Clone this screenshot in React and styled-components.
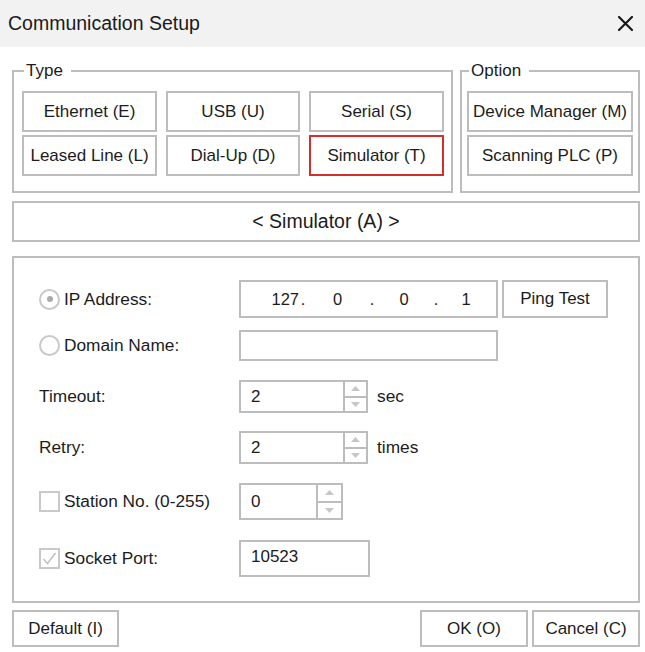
import React from 'react';
import styled, { createGlobalStyle } from 'styled-components';

const GlobalStyle = createGlobalStyle`
  html, body { margin: 0; padding: 0; background: #fff; }
  body { font-family: "Liberation Sans", Arial, Helvetica, sans-serif; color: #1c1c1c; }
  * { box-sizing: border-box; }
`;

const BORDER = '#bdbdbd';

const Dialog = styled.div`
  width: 645px;
  height: 652px;
  display: flex;
  flex-direction: column;
  background: #fff;
`;

const TitleBar = styled.div`
  height: 47px;
  flex: none;
  background: #f2f2f2;
  display: flex;
  align-items: center;
  justify-content: space-between;
  padding: 0 11px 0 8px;
  font-size: 19.5px;
  color: #1a1a1a;
`;

const CloseButton = styled.button`
  border: 0;
  background: none;
  padding: 0;
  width: 18px;
  height: 18px;
  display: flex;
  align-items: center;
  justify-content: center;
  cursor: pointer;
`;

const Body = styled.div`
  padding: 15px 5px 0 12px;
  display: flex;
  flex-direction: column;
`;

const GroupRow = styled.div`
  display: flex;
  gap: 7px;
`;

const Group = styled.fieldset`
  width: ${p => p.$w}px;
  margin: 0;
  min-width: 0;
  border: 2px solid ${BORDER};
  padding: 11px ${p => p.$pr}px 15px ${p => p.$pl}px;
`;

const Legend = styled.legend`
  font-size: 17px;
  line-height: 18px;
  margin-left: 2px;
  padding: 0 8px 0 2px;
  color: #1c1c1c;
`;

const ButtonGrid = styled.div`
  display: grid;
  grid-template-columns: ${p => p.$cols};
  grid-auto-rows: 41px;
  column-gap: 9px;
  row-gap: 3px;
`;

const TypeButton = styled.button`
  border: 2px solid ${p => (p.$active ? '#d3302c' : BORDER)};
  background: #fff;
  font-family: inherit;
  font-size: 17px;
  color: #1c1c1c;
  padding: 0;
  white-space: nowrap;
  cursor: pointer;
`;

const ModeBar = styled.div`
  margin-top: 8px;
  height: 41px;
  border: 2px solid ${BORDER};
  display: flex;
  align-items: center;
  justify-content: center;
  font-size: 19.5px;
`;

const Panel = styled.div`
  margin-top: 14px;
  height: 347px;
  border: 2px solid ${BORDER};
  padding: 22px 0 0 25px;
  display: flex;
  flex-direction: column;
`;

const FormRow = styled.div`
  display: grid;
  grid-template-columns: 200px auto;
  height: ${p => p.$h}px;
  margin-top: ${p => p.$mt || 0}px;
`;

const LabelCell = styled.label`
  display: flex;
  align-items: center;
  gap: 4px;
  font-size: 17.3px;
  color: #1c1c1c;
`;

const FieldCell = styled.div`
  display: flex;
  align-items: center;
  gap: ${p => p.$gap || 4}px;
  font-size: 17px;
`;

const Radio = styled.span`
  width: 21px;
  height: 21px;
  border-radius: 50%;
  border: 2px solid #c9c9c9;
  display: flex;
  align-items: center;
  justify-content: center;
  flex: none;
  &::after {
    content: '';
    width: 6px;
    height: 6px;
    border-radius: 50%;
    background: ${p => (p.$checked ? '#ababab' : 'transparent')};
  }
`;

const Check = styled.span`
  width: 21px;
  height: 21px;
  border: 2px solid #c9c9c9;
  display: flex;
  align-items: center;
  justify-content: center;
  flex: none;
`;

const InputBox = styled.div`
  width: ${p => p.$w}px;
  height: 100%;
  border: 2px solid ${BORDER};
  display: flex;
  align-items: ${p => (p.$top ? 'flex-start' : 'center')};
  padding: ${p => (p.$top ? '5px 0 0 10px' : '0 0 0 10px')};
  font-size: 17px;
  color: #1c1c1c;
`;

const IpBox = styled.div`
  width: 259px;
  height: 100%;
  border: 2px solid ${BORDER};
  display: grid;
  grid-template-columns: 58px 8px 61px 8px 56px 8px 52px;
  align-items: center;
  font-size: 16.5px;
`;

const IpPart = styled.span`
  text-align: ${p => p.$align || 'center'};
`;

const PingButton = styled.button`
  width: 106px;
  height: 100%;
  border: 2px solid ${BORDER};
  background: #fff;
  font-family: inherit;
  font-size: 17px;
  color: #1c1c1c;
  padding: 0;
  cursor: pointer;
`;

const SpinBox = styled.div`
  width: ${p => p.$w}px;
  height: 100%;
  border: 2px solid ${BORDER};
  display: flex;
`;

const SpinValue = styled.div`
  flex: 1;
  display: flex;
  align-items: center;
  padding-left: 10px;
  font-size: 17px;
`;

const SpinColumn = styled.div`
  width: ${p => p.$w}px;
  border-left: 2px solid ${BORDER};
  display: flex;
  flex-direction: column;
`;

const SpinHalf = styled.div`
  flex: 1;
  display: flex;
  align-items: center;
  justify-content: center;
  & + & { border-top: 2px solid ${BORDER}; }
`;

const Unit = styled.span`
  font-size: 17.3px;
`;

const Footer = styled.div`
  margin-top: 7px;
  display: flex;
  justify-content: space-between;
`;

const FooterGroup = styled.div`
  display: flex;
  gap: 4px;
`;

const FooterButton = styled.button`
  width: ${p => p.$w}px;
  height: 37px;
  border: 2px solid ${BORDER};
  background: #fff;
  font-family: inherit;
  font-size: 17px;
  color: #1c1c1c;
  padding: 0;
  cursor: pointer;
`;

const Arrow = ({ up }) => (
  <svg width="9" height="5" viewBox="0 0 9 5">
    <polygon points={up ? '0,5 9,5 4.5,0' : '0,0 9,0 4.5,5'} fill="#c6c6c6" />
  </svg>
);

const Spinner = ({ width, spinW, value }) => (
  <SpinBox $w={width}>
    <SpinValue>{value}</SpinValue>
    <SpinColumn $w={spinW}>
      <SpinHalf><Arrow up /></SpinHalf>
      <SpinHalf><Arrow /></SpinHalf>
    </SpinColumn>
  </SpinBox>
);

export default function App() {
  return (
    <>
      <GlobalStyle />
      <Dialog>
        <TitleBar>
          <span>Communication Setup</span>
          <CloseButton aria-label="Close">
            <svg width="15" height="15" viewBox="0 0 15 15">
              <path d="M1 1 L14 14 M14 1 L1 14" stroke="#1a1a1a" strokeWidth="2.2" strokeLinecap="round" />
            </svg>
          </CloseButton>
        </TitleBar>
        <Body>
          <GroupRow>
            <Group $w={441} $pl={8} $pr={7}>
              <Legend>Type</Legend>
              <ButtonGrid $cols="135px 134px 135px">
                <TypeButton>Ethernet (E)</TypeButton>
                <TypeButton>USB (U)</TypeButton>
                <TypeButton>Serial (S)</TypeButton>
                <TypeButton>Leased Line (L)</TypeButton>
                <TypeButton>Dial-Up (D)</TypeButton>
                <TypeButton $active>Simulator (T)</TypeButton>
              </ButtonGrid>
            </Group>
            <Group $w={180} $pl={5} $pr={5}>
              <Legend>Option</Legend>
              <ButtonGrid $cols="166px">
                <TypeButton>Device Manager (M)</TypeButton>
                <TypeButton>Scanning PLC (P)</TypeButton>
              </ButtonGrid>
            </Group>
          </GroupRow>
          <ModeBar>&lt; Simulator (A) &gt;</ModeBar>
          <Panel>
            <FormRow $h={38}>
              <LabelCell><Radio $checked />IP Address:</LabelCell>
              <FieldCell>
                <IpBox>
                  <IpPart $align="right">127</IpPart>
                  <IpPart>.</IpPart>
                  <IpPart>0</IpPart>
                  <IpPart>.</IpPart>
                  <IpPart>0</IpPart>
                  <IpPart>.</IpPart>
                  <IpPart>1</IpPart>
                </IpBox>
                <PingButton>Ping Test</PingButton>
              </FieldCell>
            </FormRow>
            <FormRow $h={31} $mt={12}>
              <LabelCell><Radio />Domain Name:</LabelCell>
              <FieldCell>
                <InputBox $w={259} />
              </FieldCell>
            </FormRow>
            <FormRow $h={33} $mt={19}>
              <LabelCell>Timeout:</LabelCell>
              <FieldCell $gap={9}>
                <Spinner width={129} spinW={23} value="2" />
                <Unit>sec</Unit>
              </FieldCell>
            </FormRow>
            <FormRow $h={33} $mt={18}>
              <LabelCell>Retry:</LabelCell>
              <FieldCell $gap={9}>
                <Spinner width={129} spinW={23} value="2" />
                <Unit>times</Unit>
              </FieldCell>
            </FormRow>
            <FormRow $h={37} $mt={19}>
              <LabelCell><Check />Station No. (0-255)</LabelCell>
              <FieldCell>
                <Spinner width={104} spinW={25} value="0" />
              </FieldCell>
            </FormRow>
            <FormRow $h={37} $mt={20}>
              <LabelCell>
                <Check>
                  <svg width="15" height="13" viewBox="0 0 15 13">
                    <polyline points="1.5,7 5.5,11.5 13.5,1" fill="none" stroke="#c2c2c2" strokeWidth="1.6" />
                  </svg>
                </Check>
                Socket Port:
              </LabelCell>
              <FieldCell>
                <InputBox $w={131} $top>10523</InputBox>
              </FieldCell>
            </FormRow>
          </Panel>
          <Footer>
            <FooterButton $w={107}>Default (I)</FooterButton>
            <FooterGroup>
              <FooterButton $w={108}>OK (O)</FooterButton>
              <FooterButton $w={108}>Cancel (C)</FooterButton>
            </FooterGroup>
          </Footer>
        </Body>
      </Dialog>
    </>
  );
}
